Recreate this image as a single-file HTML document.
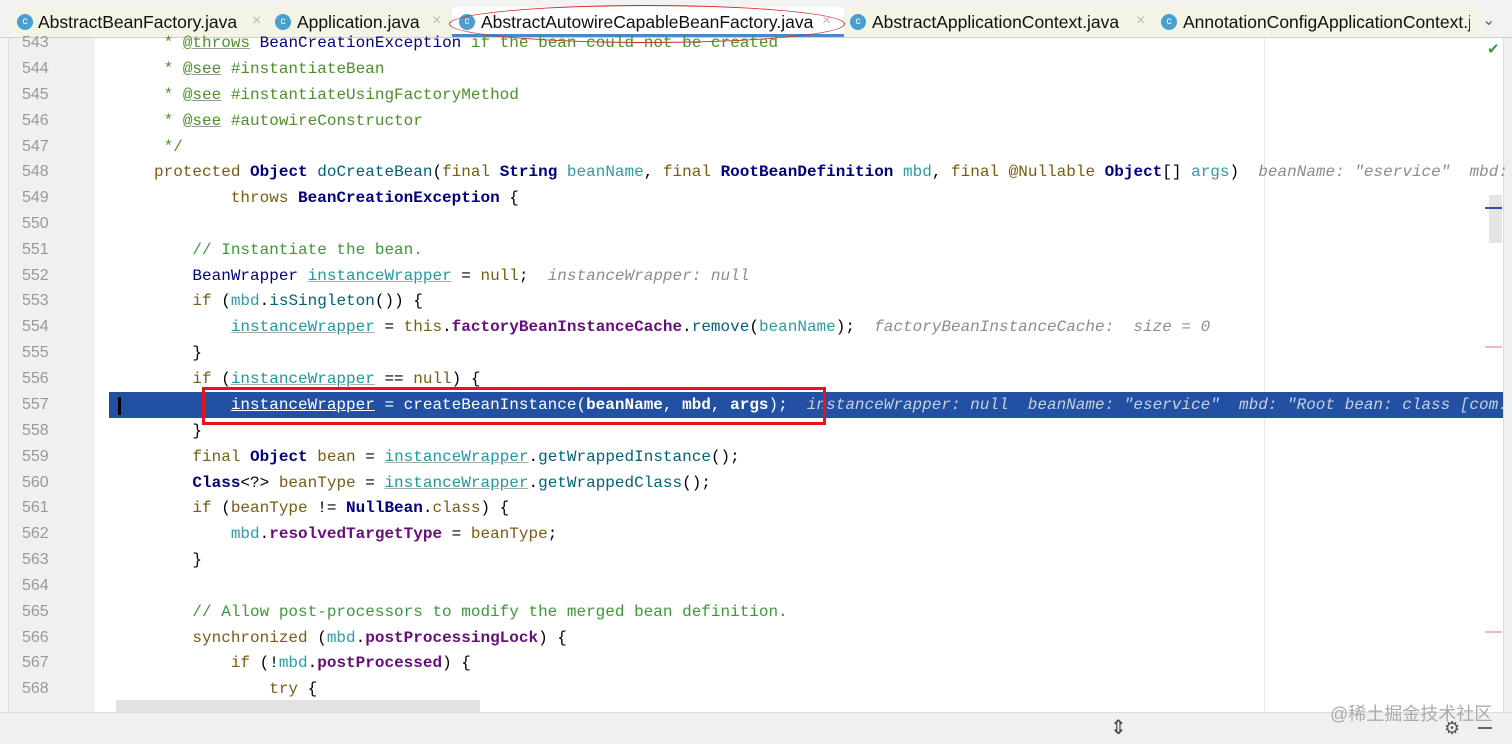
<!DOCTYPE html>
<html><head><meta charset="utf-8"><style>
body{margin:0;width:1512px;height:743px;overflow:hidden;background:#fff;position:relative;font-family:"Liberation Sans",sans-serif}
.tabs{position:absolute;left:0;top:0;width:1512px;height:37px;background:#f2f2f2;border-bottom:1px solid #d0d0d0}
.tb{position:absolute;top:7px;height:30px;background:#f3f3e6}
.tt{position:absolute;top:9px;font-size:17.5px;line-height:26px;color:#111;white-space:nowrap}
.ic{position:absolute;top:14px;width:16px;height:16px;border-radius:50%;background:#4a9fd0;color:#fff;font-size:10px;line-height:16px;text-align:center}
.x{position:absolute;top:12px;color:#bbb;font-size:16px}
.strip{position:absolute;left:0;top:38px;width:8px;height:674px;background:#f5f5f5;border-right:1px solid #ddd}
.gut{position:absolute;left:9px;top:38px;width:86px;height:674px;background:#f0f0f0}
.ln{position:absolute;left:22px;font:16px "Liberation Sans",sans-serif;color:#999;height:26px;line-height:26px}
.code{position:absolute;left:115.6px;font:16px/26px "Liberation Mono",monospace;white-space:pre;color:#000;height:26px}
.k{color:#7b5a14}.t{color:#000080;font-weight:bold}.p{color:#2a9ea3}.m{color:#00627a}.f{color:#660e7a;font-weight:bold}
.c{color:#3a9a3a}.d{color:#4d8f2a}.u{text-decoration:underline;text-decoration-color:#999}
.h{color:#8c8c8c;font-style:italic}.lv{color:#20999d;text-decoration:underline;text-decoration-color:#aaa}
.sel{position:absolute;left:109px;top:392px;width:1394px;height:26px;background:#2251a3}
.box{position:absolute;left:202px;top:387px;width:618px;height:32px;border:3px solid #e5141e}
.margin{position:absolute;left:1264px;top:38px;width:1px;height:674px;background:#e8e8e8}
.status{position:absolute;left:0;top:712px;width:1512px;height:31px;background:#f0f0f0;border-top:1px solid #ddd}
.rside{position:absolute;left:1503px;top:38px;width:9px;height:674px;background:#f0f0f0;border-left:1px solid #ddd}
</style></head><body>
<div class="tabs">
<div class="tb" style="left:12px;width:1470px"></div>
<div class="tb" style="left:452px;width:392px;background:#fff;border-bottom:3px solid #4a88c7;height:27px"></div>
<div class="ic" style="left:17px">c</div><div class="tt" style="left:38px">AbstractBeanFactory.java</div><div class="x" style="left:252px">×</div>
<div class="ic" style="left:275px">c</div><div class="tt" style="left:297px">Application.java</div><div class="x" style="left:432px">×</div>
<div class="ic" style="left:459px">c</div><div class="tt" style="left:481px">AbstractAutowireCapableBeanFactory.java</div><div class="x" style="left:822px">×</div>
<div style="position:absolute;left:449px;top:5px;width:394px;height:36px;border:1px solid #d22;border-radius:50%"></div>
<div class="ic" style="left:850px">c</div><div class="tt" style="left:872px">AbstractApplicationContext.java</div><div class="x" style="left:1136px">×</div>
<div class="ic" style="left:1161px">c</div><div class="tt" style="left:1183px;width:287px;overflow:hidden">AnnotationConfigApplicationContext.java</div>
<div style="position:absolute;left:1482px;top:10px;font-size:16px;color:#666">⌄</div>
</div>
<div class="strip"></div><div class="gut"></div>
<div class="margin"></div>
<div class="sel"></div>
<div class="rside"></div>
<div style="position:absolute;left:1487px;top:40px;color:#3a9a3a;font-size:15px">✔</div>
<div style="position:absolute;left:1489px;top:195px;width:13px;height:48px;background:#e4e4e4"></div>
<div style="position:absolute;left:1485px;top:207px;width:17px;height:2px;background:#2a55a0"></div>
<div style="position:absolute;left:1485px;top:346px;width:17px;height:2px;background:#f0b8bc"></div>
<div style="position:absolute;left:1485px;top:631px;width:17px;height:2px;background:#f0b8bc"></div>
<div style="position:absolute;left:116px;top:700px;width:364px;height:12px;background:#e2e2e2"></div>
<div style="position:absolute;left:118px;top:397px;width:3px;height:18px;background:#000"></div>

<div class="ln" style="top:30px">543</div><div class="code" style="top:30px"><span class="d">     * <span class="u">@throws</span> <span class="t" style="font-weight:normal">BeanCreationException</span> if the bean could not be created</span></div>
<div class="ln" style="top:56px">544</div><div class="code" style="top:56px"><span class="d">     * <span class="u">@see</span> #instantiateBean</span></div>
<div class="ln" style="top:82px">545</div><div class="code" style="top:82px"><span class="d">     * <span class="u">@see</span> #instantiateUsingFactoryMethod</span></div>
<div class="ln" style="top:108px">546</div><div class="code" style="top:108px"><span class="d">     * <span class="u">@see</span> #autowireConstructor</span></div>
<div class="ln" style="top:134px">547</div><div class="code" style="top:134px"><span class="d">     */</span></div>
<div class="ln" style="top:159px">548</div><div class="code" style="top:159px">    <span class="k">protected</span> <span class="t">Object</span> <span class="m">doCreateBean</span>(<span class="k">final</span> <span class="t">String</span> <span class="p">beanName</span>, <span class="k">final</span> <span class="t">RootBeanDefinition</span> <span class="p">mbd</span>, <span class="k">final</span> <span class="k">@Nullable</span> <span class="t">Object</span>[] <span class="p">args</span>)  <span class="h">beanName: "eservice"  mbd: "</span></div>
<div class="ln" style="top:185px">549</div><div class="code" style="top:185px">            <span class="k">throws</span> <span class="t">BeanCreationException</span> {</div>
<div class="ln" style="top:211px">550</div>
<div class="ln" style="top:237px">551</div><div class="code" style="top:237px">        <span class="c">// Instantiate the bean.</span></div>
<div class="ln" style="top:263px">552</div><div class="code" style="top:263px">        <span class="t" style="font-weight:normal">BeanWrapper</span> <span class="lv">instanceWrapper</span> = <span class="k">null</span>;  <span class="h">instanceWrapper: null</span></div>
<div class="ln" style="top:288px">553</div><div class="code" style="top:288px">        <span class="k">if</span> (<span class="p">mbd</span>.<span class="m">isSingleton</span>()) {</div>
<div class="ln" style="top:314px">554</div><div class="code" style="top:314px">            <span class="lv">instanceWrapper</span> = <span class="k">this</span>.<span class="f">factoryBeanInstanceCache</span>.<span class="m">remove</span>(<span class="p">beanName</span>);  <span class="h">factoryBeanInstanceCache:  size = 0</span></div>
<div class="ln" style="top:340px">555</div><div class="code" style="top:340px">        }</div>
<div class="ln" style="top:366px">556</div><div class="code" style="top:366px">        <span class="k">if</span> (<span class="lv">instanceWrapper</span> == <span class="k">null</span>) {</div>
<div class="ln" style="top:392px">557</div><div class="code" style="top:392px;color:#fff">            <span style="text-decoration:underline">instanceWrapper</span> = createBeanInstance(<b>beanName</b>, <b>mbd</b>, <b>args</b>);  <span class="h" style="color:#c8d0e0">instanceWrapper: null  beanName: "eservice"  mbd: "Root bean: class [com.</span></div>
<div class="ln" style="top:418px">558</div><div class="code" style="top:418px">        }</div>
<div class="ln" style="top:444px">559</div><div class="code" style="top:444px">        <span class="k">final</span> <span class="t">Object</span> <span class="k">bean</span> = <span class="lv">instanceWrapper</span>.<span class="m">getWrappedInstance</span>();</div>
<div class="ln" style="top:470px">560</div><div class="code" style="top:470px">        <span class="t">Class</span>&lt;?&gt; <span class="k">beanType</span> = <span class="lv">instanceWrapper</span>.<span class="m">getWrappedClass</span>();</div>
<div class="ln" style="top:495px">561</div><div class="code" style="top:495px">        <span class="k">if</span> (<span class="k">beanType</span> != <span class="t">NullBean</span>.<span class="k">class</span>) {</div>
<div class="ln" style="top:521px">562</div><div class="code" style="top:521px">            <span class="p">mbd</span>.<span class="f">resolvedTargetType</span> = <span class="k">beanType</span>;</div>
<div class="ln" style="top:547px">563</div><div class="code" style="top:547px">        }</div>
<div class="ln" style="top:573px">564</div>
<div class="ln" style="top:599px">565</div><div class="code" style="top:599px">        <span class="c">// Allow post-processors to modify the merged bean definition.</span></div>
<div class="ln" style="top:625px">566</div><div class="code" style="top:625px">        <span class="k">synchronized</span> (<span class="p">mbd</span>.<span class="f">postProcessingLock</span>) {</div>
<div class="ln" style="top:650px">567</div><div class="code" style="top:650px">            <span class="k">if</span> (!<span class="p">mbd</span>.<span class="f">postProcessed</span>) {</div>
<div class="ln" style="top:676px">568</div><div class="code" style="top:676px">                <span class="k">try</span> {</div>
<div class="box"></div>
<div class="status">
<div style="position:absolute;left:1110px;top:2px;font-size:20px;color:#444">⇕</div>
<div style="position:absolute;left:1444px;top:5px;font-size:18px;color:#555">⚙</div>
<div style="position:absolute;left:1478px;top:14px;width:14px;height:2px;background:#666"></div>
</div>
<div style="position:absolute;left:1330px;top:700px;font:18px 'Liberation Sans','Noto Sans CJK SC',sans-serif;color:#aaa">@稀土掘金技术社区</div>
</body></html>
